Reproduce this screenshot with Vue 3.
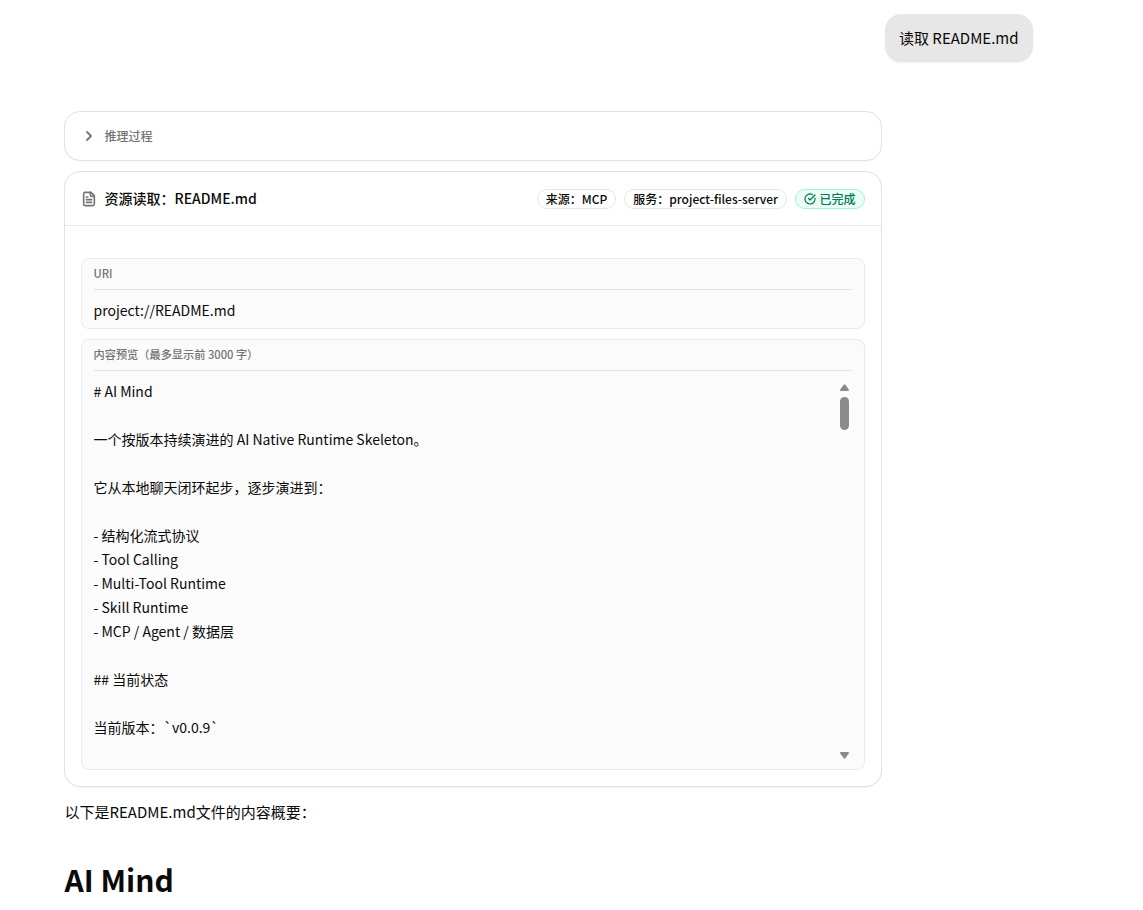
<script setup>
const preview = `# AI Mind

一个按版本持续演进的 AI Native Runtime Skeleton。

它从本地聊天闭环起步，逐步演进到：

- 结构化流式协议
- Tool Calling
- Multi-Tool Runtime
- Skill Runtime
- MCP / Agent / 数据层

## 当前状态

当前版本：\`v0.0.9\``
</script>

<template>
  <main class="chat">
    <div class="user-row"><div class="bubble">读取 README.md</div></div>
    <section class="assistant">
      <div class="card reasoning">
        <svg class="chevron" viewBox="0 0 24 24"><path d="m9 18 6-6-6-6" /></svg>
        <span>推理过程</span>
      </div>
      <div class="card resource">
        <header class="head">
          <svg class="file" viewBox="0 0 24 24">
            <path d="M15 2H6a2 2 0 0 0-2 2v16a2 2 0 0 0 2 2h12a2 2 0 0 0 2-2V7Z" />
            <path d="M14 2v4a2 2 0 0 0 2 2h4M10 9H8M16 13H8M16 17H8" />
          </svg>
          <span class="title">资源读取：README.md</span>
          <span class="badge">来源：MCP</span>
          <span class="badge">服务：project-files-server</span>
          <span class="badge done">
            <svg viewBox="0 0 24 24">
              <path d="M21.8 10A10 10 0 1 1 17 3.335" />
              <path d="m9 11 3 3L22 4" />
            </svg>
            <span>已完成</span>
          </span>
        </header>
        <div class="body">
          <div class="panel">
            <div class="label">URI</div>
            <div class="value">project://README.md</div>
          </div>
          <div class="panel">
            <div class="label">内容预览（最多显示前 3000 字）</div>
            <div class="scroll">
              <pre class="preview">{{ preview }}</pre>
              <div class="track">
                <svg viewBox="0 0 9 7"><path d="M3.7.7Q4.5-.4 5.3.7L8.8 5.6Q9.2 7 8 7H1Q-.2 7 .2 5.6Z" /></svg>
                <div class="thumb"></div>
                <svg class="down" viewBox="0 0 9 7"><path d="M3.7 6.3Q4.5 7.4 5.3 6.3L8.8 1.4Q9.2 0 8 0H1Q-.2 0 .2 1.4Z" /></svg>
              </div>
            </div>
          </div>
        </div>
      </div>
      <p class="summary">以下是README.md文件的内容概要：</p>
      <h1>AI Mind</h1>
    </section>
  </main>
</template>

<style>
html, body { background: #fff; overflow: hidden; }
</style>

<style scoped>
* { box-sizing: border-box; }
.chat {
  height: 910px;
  overflow: hidden;
  padding: 14px 110px 0 64px;
  color: #0a0a0a;
  font-family: "Noto Sans CJK SC", sans-serif;
}
.user-row { display: flex; justify-content: flex-end; }
.bubble {
  height: 48px;
  width: 148px;
  padding: 12px 0 12px 14px;
  border-radius: 16px;
  background: #e7e7e7;
  box-shadow: 0 1px 2px rgba(0, 0, 0, 0.06);
  font-size: 15px;
  line-height: 24px;
  white-space: nowrap;
}
.assistant { width: 818px; margin-top: 49px; }
.card {
  border: 1px solid #e2e2e2;
  border-radius: 16px;
  background: #fff;
  box-shadow: 0 1px 1px rgba(0, 0, 0, 0.03);
}
svg { fill: none; stroke: currentColor; stroke-width: 2; stroke-linecap: round; stroke-linejoin: round; flex: none; }
.reasoning {
  height: 50px;
  display: flex;
  align-items: center;
  gap: 7.5px;
  padding-left: 16px;
  color: #737373;
  font-size: 12px;
  font-weight: 500;
}
.reasoning span { padding-bottom: 1px; }
.chevron { width: 16px; height: 16px; stroke-width: 2.7; }
.resource { height: 616px; margin-top: 10px; }
.head {
  height: 54px;
  display: flex;
  align-items: center;
  padding: 0 16px;
  border-bottom: 1px solid #ebebeb;
}
.file { width: 16px; height: 16px; color: #737373; margin-right: 7.5px; stroke-width: 2.4; }
.title { font-size: 14px; font-weight: 500; line-height: 20px; padding-bottom: 2px; margin-right: auto; }
.badge {
  height: 20px;
  display: flex;
  align-items: center;
  padding: 0 8px;
  margin-left: 8px;
  border: 1px solid #e5e5e5;
  border-radius: 10px;
  font-size: 12px;
  font-weight: 500;
  line-height: 18px;
  white-space: nowrap;
}
.done { gap: 3.5px; padding: 0 8.5px 0 8px; color: #007a55; background: #ecfdf5; border-color: #a4f4cf; }
.done svg { width: 12px; height: 12px; stroke-width: 2.4; }
.body { padding: 32px 16px 0; display: flex; flex-direction: column; gap: 10px; }
.panel { border: 1px solid #ebebeb; border-radius: 8px; background: #fbfbfb; padding: 0 12px; }
.label {
  height: 31px;
  border-bottom: 1px solid #e3e3e3;
  font-size: 11.2px;
  font-weight: 500;
  line-height: 29px;
  color: #737373;
}
.value, .label { text-indent: -0.5px; }
.value { height: 38px; padding-top: 8px; font-size: 14px; line-height: 24px; }
.scroll { display: flex; justify-content: space-between; height: 398px; padding-top: 8px; }
.preview { margin: 0 0 0 -0.5px; font: inherit; font-size: 14px; line-height: 24px; white-space: pre-wrap; }
.track { width: 15px; height: 382px; margin-top: 1px; padding: 4px 3px 3px; background: #fcfcfc; display: flex; flex-direction: column; align-items: center; }
.track svg { width: 9px; height: 7px; fill: #8b8b8b; stroke: none; }
.thumb { width: 9px; height: 33px; margin: 6px 0 auto; border-radius: 5px; background: #8b8b8b; }
.summary { margin: 13px 0 0 0.5px; font-size: 15px; line-height: 24px; }
h1 { margin: 35px 0 0 0.5px; font-size: 30px; line-height: 40px; font-weight: 600; }
</style>
